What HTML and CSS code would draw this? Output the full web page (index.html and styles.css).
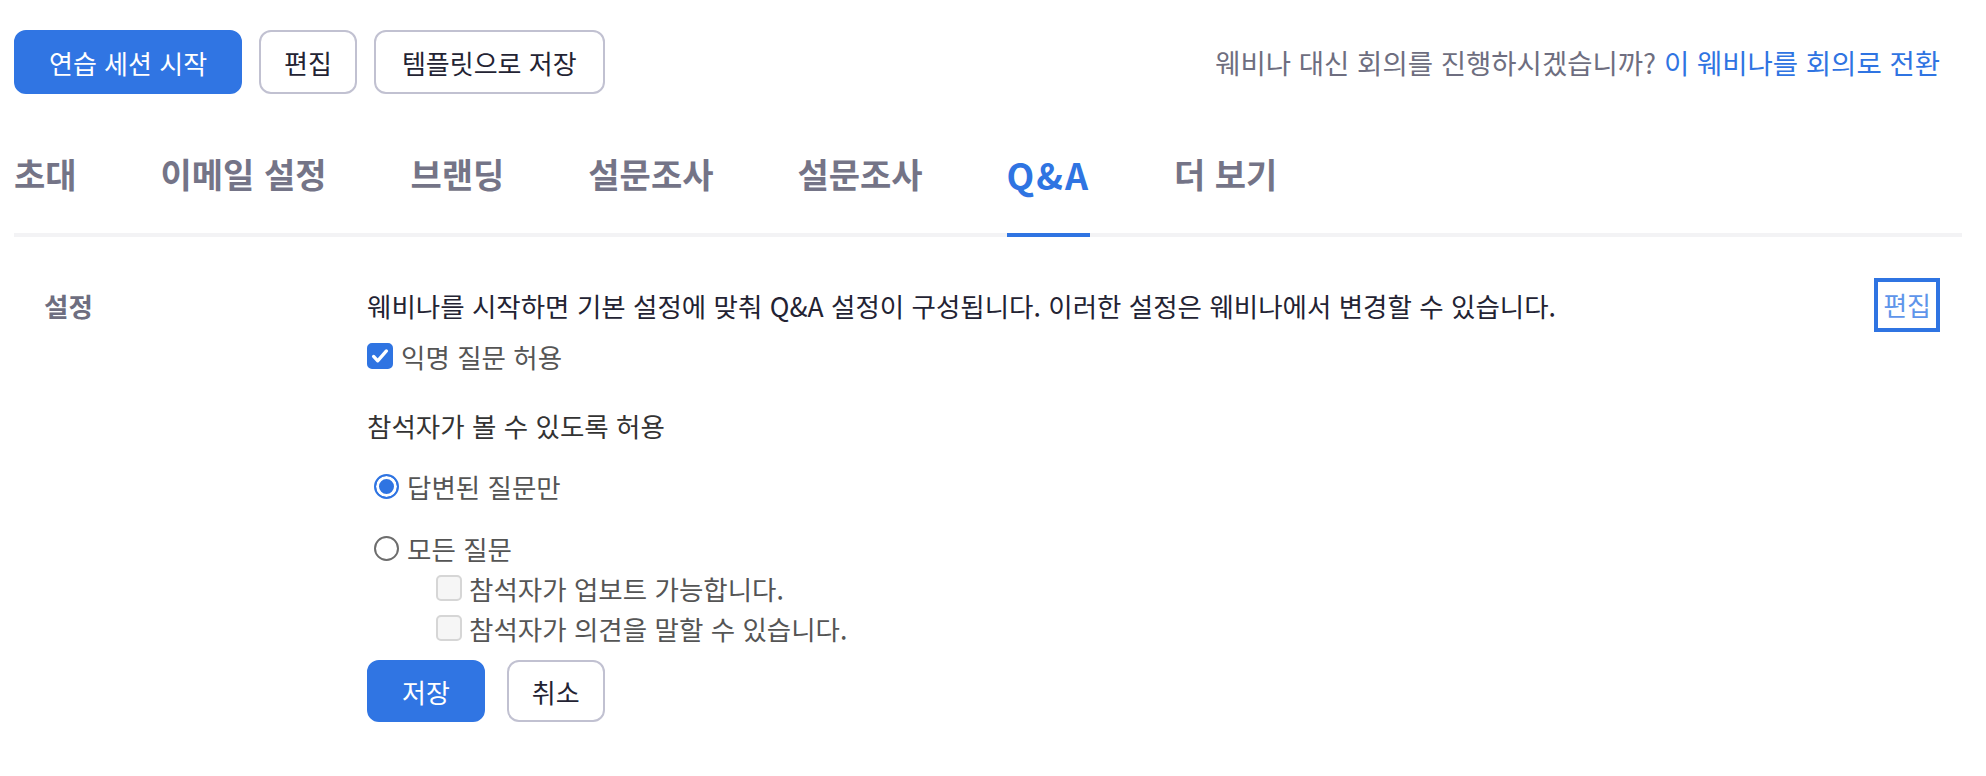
FILE: index.html
```html
<!DOCTYPE html>
<html lang="ko">
<head>
  <meta charset="UTF-8">
  <meta name="viewport" content="width=device-width, initial-scale=1">
  <title>웨비나 Q&amp;A 설정</title>
  <link rel="stylesheet" href="styles.css">
</head>
<body>
  <div class="page">
    <header class="top-bar">
      <div class="top-actions">
        <button class="btn btn-primary">연습 세션 시작</button>
        <button class="btn">편집</button>
        <button class="btn btn-wide">템플릿으로 저장</button>
      </div>
      <p class="convert-note">웨비나 대신 회의를 진행하시겠습니까? <a href="#">이 웨비나를 회의로 전환</a></p>
    </header>

    <nav class="tabs">
      <a href="#">초대</a>
      <a href="#">이메일 설정</a>
      <a href="#">브랜딩</a>
      <a href="#">설문조사</a>
      <a href="#">설문조사</a>
      <a href="#" class="active latin">Q&amp;A</a>
      <a href="#">더 보기</a>
    </nav>

    <section class="setting-row">
      <div class="setting-label">설정</div>
      <div class="setting-body">
        <p class="setting-desc">웨비나를 시작하면 기본 설정에 맞춰 Q&amp;A 설정이 구성됩니다. 이러한 설정은 웨비나에서 변경할 수 있습니다.</p>

        <label class="check-row">
          <span class="box checked">
            <svg viewBox="0 0 24 24" width="22" height="22"><path d="M5 12.5l4.5 4.8L19 6.5" fill="none" stroke="#fff" stroke-width="3.6" stroke-linecap="round" stroke-linejoin="round"/></svg>
          </span>
          익명 질문 허용
        </label>

        <p class="group-title">참석자가 볼 수 있도록 허용</p>

        <label class="radio-row first">
          <span class="radio on"></span>
          답변된 질문만
        </label>
        <label class="radio-row second">
          <span class="radio"></span>
          모든 질문
        </label>

        <div class="sub-options">
          <label class="check-row sub">
            <span class="box"></span>
            참석자가 업보트 가능합니다.
          </label>
          <label class="check-row sub">
            <span class="box"></span>
            참석자가 의견을 말할 수 있습니다.
          </label>
        </div>

        <div class="form-actions">
          <button class="btn btn-primary">저장</button>
          <button class="btn">취소</button>
        </div>
      </div>
      <a href="#" class="edit-link">편집</a>
    </section>
  </div>
</body>
</html>
```

FILE: styles.css
```css
body { margin: 0; background: #fff; color: #232333; font-family: "Noto Sans CJK KR", "Noto Sans", sans-serif; font-size: 26.5px;}
p { margin: 0;}
a { text-decoration: none;}
.page { margin: 0 24px 0 14px;}

/* top bar */
.top-bar { display: flex; align-items: center; justify-content: space-between; padding-top: 30px;}
.top-actions { display: flex; gap: 17px;}
.btn { height: 64px; padding: 0 23px; border: 2px solid #c1c1d1; border-radius: 12px; background: #fff; color: #232333; font-family: inherit; font-size: 26px; cursor: pointer;}
.btn-wide { padding: 0 26px;}
.btn-primary { background: #3075e3; border-color: #3075e3; color: #fff; padding: 0 33px;}
.convert-note { color: #6e6e80; font-size: 27.5px; padding-right: 22px;}
.convert-note a { color: #2f74e2;}

/* tabs */
.tabs { display: flex; gap: 84px; margin-top: 58px; border-bottom: 4px solid #f3f3f5;}
.tabs a { color: #747487; font-size: 34px; font-weight: bold; line-height: 44px; padding-bottom: 37px; margin-bottom: -4px; border-bottom: 4px solid transparent;}
.tabs a.latin { font-size: 36px; letter-spacing: 2px;}
.tabs a.active { color: #2f74e2; border-bottom-color: #2f74e2; border-radius: 2px 2px 0 0;}

/* settings */
.setting-row { display: flex; align-items: flex-start; padding: 41px 22px 0 0;}
.setting-label { width: 323px; padding-left: 30px; margin-top: 10px; color: #6e6e80; font-weight: bold; line-height: 36px;}
.setting-body { flex: 1;}
.setting-desc { margin-top: 10px; line-height: 36px;}
.check-row { display: flex; align-items: center; gap: 8px; height: 36px; color: #555;}
.setting-desc + .check-row { margin-top: 14px;}
.box { width: 26px; height: 26px; box-sizing: border-box; border-radius: 5px; display: flex; align-items: center; justify-content: center; background: #f6f6f6; border: 2px solid #d6d6d6;}
.box.checked { background: #2f74e2; border-color: #2f74e2;}
.group-title { margin-top: 34px; line-height: 36px; color: #333;}
.radio-row { display: flex; align-items: center; gap: 8px; height: 36px; padding-left: 7px; color: #555;}
.radio-row.first { margin-top: 24px;}
.radio-row.second { margin-top: 26px;}
.radio { width: 25px; height: 25px; box-sizing: border-box; border-radius: 50%; border: 2px solid #6d6d6d; background: #fff;}
.radio.on { border: 2.5px solid #2f74e2; box-shadow: inset 0 0 0 3px #fff; background: #2f74e2;}
.sub-options { padding-left: 69px;}
.check-row.sub { margin-top: 4px; gap: 7px;}
.form-actions { display: flex; gap: 22px; margin-top: 14px;}
.form-actions .btn { height: 62px;}
.edit-link { color: #5e95ea; border: 4px solid #2f74e2; padding: 0 5px; line-height: 46px; font-size: 26px;}
```
